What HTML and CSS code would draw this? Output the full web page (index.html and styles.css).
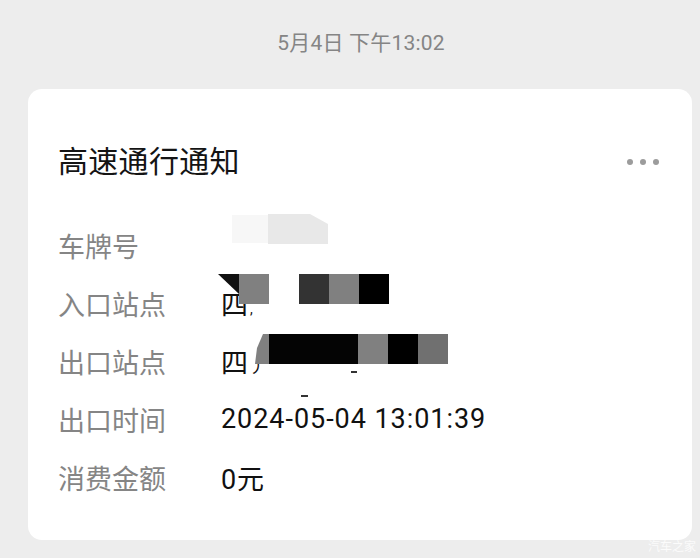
FILE: index.html
```html
<!DOCTYPE html>
<html lang="zh">
<head>
<meta charset="utf-8">
<title>高速通行通知</title>
<link rel="stylesheet" href="styles.css">
</head>
<body>
<div class="time">5月4日 下午13:02</div>
<div class="card">
  <div class="head">
    <div class="title">高速通行通知</div>
    <div class="more"><span></span><span></span><span></span></div>
  </div>
  <div class="rows">
    <div class="row"><div class="label">车牌号</div><div class="value"></div></div>
    <div class="row"><div class="label">入口站点</div><div class="value">四<span class="frag">,</span></div></div>
    <div class="row"><div class="label">出口站点</div><div class="value">四<span class="stroke">丿</span></div></div>
    <div class="row"><div class="label">出口时间</div><div class="value wide">2024-05-04 13:01:39</div></div>
    <div class="row"><div class="label">消费金额</div><div class="value wide">0元</div></div>
  </div>

  <div class="mask m1a"></div>
  <div class="mask m1b"></div>
  <div class="mask m2t"></div>
  <div class="mask m2a"></div>
  <div class="mask m2b"></div>
  <div class="mask m2c"></div>
  <div class="mask m2d"></div>
  <div class="mask m3s"></div>
  <div class="mask m3a"></div>
  <div class="mask m3b"></div>
  <div class="mask m3c"></div>
  <div class="mask m3d"></div>
  <div class="mask d1"></div>
  <div class="mask d2"></div>
</div>
<div class="mark">汽车之家</div>
</body>
</html>
```

FILE: styles.css
```css
html, body {
  margin: 0;
  padding: 0;
}
body {
  width: 700px;
  height: 558px;
  overflow: hidden;
  background: #ededed;
  font-family: Roboto, "Noto Sans CJK SC", sans-serif;
  position: relative;
}
.time {
  padding: 29px 0 0 22px;
  height: 28px;
  line-height: 28px;
  text-align: center;
  font-size: 21px;
  letter-spacing: 0.2px;
  color: #858585;
}
.card {
  margin: 32px 8px 0 28px;
  height: 451px;
  box-sizing: border-box;
  background: #fff;
  border-radius: 14px;
  position: relative;
  padding: 53px 33px 0 30px;
}
.head {
  display: flex;
  justify-content: space-between;
  align-items: center;
  height: 40px;
}
.title {
  font-size: 30px;
  line-height: 40px;
  color: #141414;
  letter-spacing: 0.3px;
}
.more {
  display: flex;
  gap: 7px;
}
.more span {
  width: 6px;
  height: 6px;
  border-radius: 50%;
  background: #9c9c9c;
}
.rows {
  margin-top: 34px;
}
.row {
  display: flex;
  align-items: center;
  height: 58px;
}
.label {
  width: 163px;
  font-size: 27px;
  color: #858585;
}
.value {
  font-size: 27px;
  color: #111;
  display: flex;
  align-items: center;
}
.wide {
  letter-spacing: 0.95px;
}
.frag {
  font-size: 14px;
  margin-left: 2px;
  margin-top: 12px;
}
.stroke {
  font-size: 17px;
  margin-left: 1px;
  margin-top: 8px;
}
.mask {
  position: absolute;
}
.m1a { left: 204px; top: 126px; width: 36px; height: 28px; background: #f7f7f7; }
.m1b { left: 240px; top: 125px; width: 60px; height: 30px; background: #e8e8e8;
  clip-path: polygon(0 0, 42px 0, 60px 10px, 60px 30px, 0 30px); }
.m2t { left: 190px; top: 185px; width: 21px; height: 20px; background: #111;
  clip-path: polygon(0 0, 100% 0, 100% 100%); }
.m2a { left: 211px; top: 185px; width: 30px; height: 30px; background: #808080; }
.m2b { left: 271px; top: 185px; width: 30px; height: 30px; background: #333; }
.m2c { left: 301px; top: 185px; width: 30px; height: 30px; background: #808080; }
.m2d { left: 331px; top: 185px; width: 30px; height: 30px; background: #000; }
.m3s { left: 227px; top: 245px; width: 14px; height: 30px; background: #808080;
  clip-path: polygon(8px 0, 100% 0, 100% 100%, 0 100%, 2px 14px); }
.m3a { left: 241px; top: 245px; width: 89px; height: 30px; background: #040404; }
.m3b { left: 330px; top: 245px; width: 30px; height: 30px; background: #808080; }
.m3c { left: 360px; top: 245px; width: 30px; height: 30px; background: #000; }
.m3d { left: 390px; top: 245px; width: 30px; height: 30px; background: #707070; }
.d1 { left: 323px; top: 282px; width: 6px; height: 2px; background: #333; }
.d2 { left: 273px; top: 306px; width: 7px; height: 2px; background: #333; }
.mark {
  position: absolute;
  left: 648px;
  top: 539px;
  font-size: 12px;
  line-height: 16px;
  color: #fbfbfb;
}
```
